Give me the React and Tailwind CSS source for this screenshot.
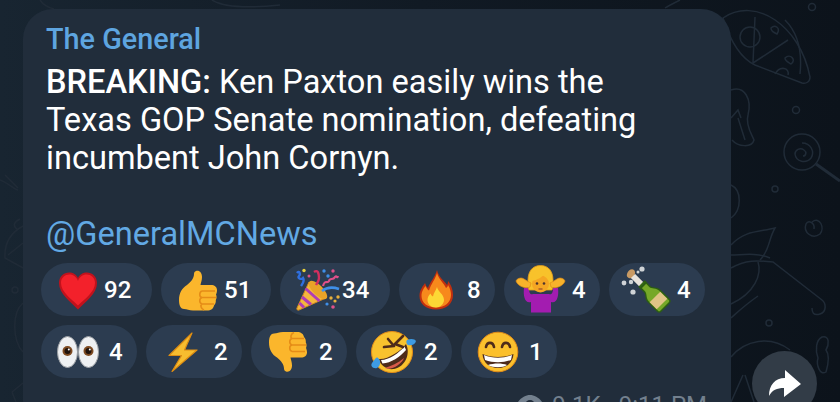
const Heart = () => (
  <svg width="44" height="44" viewBox="0 0 44 44" className="overflow-visible">
    <path d="M22 41.5C15 34 3 26 3 15C3 8.5 8 4.5 13 4.5C17 4.5 20.5 6.5 22 10C23.5 6.5 27 4.5 31 4.5C36 4.5 41 8.5 41 15C41 26 29 34 22 41.5Z" fill="#c1121c" />
    <path d="M22 37.5C15.5 31 5 24 5 15C5 9.5 9 6.5 13.5 6.5C17.5 6.5 20.5 9 22 13C23.5 9 26.5 6.5 30.5 6.5C35 6.5 39 9.5 39 15C39 24 28.5 31 22 37.5Z" fill="#f3212b" />
  </svg>
);
const ThumbShape = () => (
  <g>
    <path d="M20 3C23.5 2 26 5 26 9C26 12 25 14.5 24.5 17L35 17C38.5 17 41 19 41 22C41 24 40.5 25.5 40 26.5C40.8 28 40.8 30.5 39.8 32C40 34 39.5 36 38 37.5C37.5 40.5 35 42.5 31 42.5L17 42.5C13 42.5 11 41 8 41C5 41 3 38 3 32C3 25 6 20 11 17C15 14 18 10 18 6C18 4.5 18.8 3.4 20 3Z" fill="#fbb62c" />
    <path d="M26 23H39M26 29.5H40M26 36H38M26 23C23 24 23 29 26 29.5C23 30.5 23 35 26 36C24 37 25 41 28 42" stroke="#e58c17" strokeWidth="1.6" fill="none" />
  </g>
);
const Thumb = () => (
  <svg width="44" height="44" viewBox="0 0 44 44" className="overflow-visible"><ThumbShape /></svg>
);
const ThumbDown = () => (
  <svg width="44" height="44" viewBox="0 0 44 44" className="overflow-visible"><g transform="translate(0 44.5) scale(1 -1)"><ThumbShape /></g></svg>
);
const Party = () => (
  <svg width="44" height="44" viewBox="0 0 44 44" className="overflow-visible">
    <path d="M14 14L31 30L4 42C2.5 42.6 1.3 41.3 2 40Z" fill="#f4b73d" stroke="#d48a1d" strokeWidth="1" />
    <path d="M10.5 20.5L24.5 33M7 29L16 36.5M4.5 35L9 39.5" stroke="#b03cb5" strokeWidth="3" fill="none" />
    <ellipse cx="23" cy="22" rx="5" ry="12" transform="rotate(-45 23 22)" fill="#e8a328" />
    <path d="M2 5C4 2 6 6 4 8C2 10 6 12 8 10C10 13 8 15 6 18" stroke="#2f6fe0" strokeWidth="2.4" fill="none" />
    <path d="M19 4C23 1 24 6 24 10C24 13 22 15 21 17" stroke="#d32f5f" strokeWidth="2.4" fill="none" />
    <path d="M28 18C30 11 32 16 34 13C35 9 38 13 40 9C42 7 42 11 43 8" stroke="#e0508a" strokeWidth="2.2" fill="none" />
    <path d="M27 23C32 19 38 19 44 21" stroke="#3f8fe8" strokeWidth="2.6" fill="none" />
    <circle cx="9" cy="2.5" r="1.7" fill="#e9d23c" />
    <circle cx="29" cy="3" r="1.7" fill="#3f8fe8" />
    <circle cx="33" cy="8" r="1.7" fill="#3f8fe8" />
    <circle cx="38" cy="3" r="1.7" fill="#e0508a" />
    <circle cx="14" cy="8" r="1.5" fill="#e0508a" />
    <circle cx="36" cy="30" r="1.7" fill="#e8b03c" />
    <circle cx="43" cy="29" r="1.7" fill="#e8b03c" />
    <circle cx="40" cy="33" r="1.6" fill="#e8b03c" />
    <circle cx="32" cy="36" r="1.6" fill="#3f8fe8" />
    <circle cx="38" cy="39" r="1.8" fill="#e0508a" />
  </svg>
);
const Fire = () => (
  <svg width="44" height="44" viewBox="0 0 44 44" className="overflow-visible">
    <path d="M23 2C25 10 30 12 33 17C34 15.5 34 14 34 13C38 18 39 23 39 27C39 36 32 41.5 22 41.5C12 41.5 5.5 36 5.5 28C5.5 22 9 18 11 15C12 17 12.5 19 14 20C16 14 21 9 23 2Z" fill="#c2300f" />
    <path d="M23 5C25 12 30 15 32 20C33.5 19 34 18 34 17C36.5 21 37 24 37 27C37 34 31 39.5 22 39.5C13 39.5 7.5 34.5 7.5 28C7.5 23 10 20 11.5 18C12.5 20 13.5 22 15 22.5C17 16 21.5 11 23 5Z" fill="#f7891c" />
    <path d="M23 19C24 24 30 26 30 32C30 36 26 39.5 22 39.5C17 39.5 13.5 36 13.5 32C13.5 29 15 27 16.5 25.5C17 27 18 28 19 28.5C19.5 25 22 22.5 23 19Z" fill="#fdd835" />
  </svg>
);
const Shrug = () => (
  <svg width="44" height="44" viewBox="0 0 44 44" className="overflow-visible">
    <path d="M5 20L10 20C10 26 12 27 14 26L30 26C32 27 34 26 34 20L39 20C40 28 38 36 32 34L32 44.5L12 44.5L12 34C6 36 4 28 5 20Z" fill="#a31cb0" />
    <path d="M21.5 -2.5C13 -2.5 9 4 9 12C9 16 9 19 10 22L33 22C34 19 34 16 34 12C34 4 30 -2.5 21.5 -2.5Z" fill="#f8c22b" stroke="#e39a1a" strokeWidth="0.8" />
    <circle cx="21.5" cy="16" r="8.5" fill="#f5a623" />
    <path d="M13 13C18 12 24 9 26 5C28 9 30 11 31 13C32 5 27 0 21 1C16 2 12 7 13 13Z" fill="#f8c22b" />
    <circle cx="18" cy="15.5" r="1.3" fill="#4e342e" />
    <circle cx="25" cy="15.5" r="1.3" fill="#4e342e" />
    <path d="M19.5 21H23.5" stroke="#a1502a" strokeWidth="1.3" />
    <path d="M-3 13C-2 10.5 2 9 5 11C8 13 10 14 12 15L11 19C8 21 -1 19 -3 13Z" fill="#f8b22b" stroke="#e08c14" strokeWidth="0.7" />
    <path d="M46 13C45 10.5 41 9 38 11C35 13 33 14 31 15L32 19C35 21 44 19 46 13Z" fill="#f8b22b" stroke="#e08c14" strokeWidth="0.7" />
  </svg>
);
const Bottle = () => (
  <svg width="44" height="44" viewBox="0 0 44 44" className="overflow-visible">
    <path d="M3 6C4 2 8 0 10 2C12 4 11 8 8 10C5 11 2 9 3 6Z" fill="#c99a63" />
    <path d="M9 8L18 17" stroke="#e8e3dc" strokeWidth="6" />
    <circle cx="18" cy="1" r="2.6" fill="#cfd3d6" />
    <circle cx="14" cy="4" r="1.5" fill="#cfd3d6" />
    <circle cx="0" cy="15" r="2.4" fill="#cfd3d6" />
    <circle cx="7" cy="14" r="2.2" fill="#cfd3d6" />
    <circle cx="9" cy="24" r="2.6" fill="#cfd3d6" />
    <g transform="translate(17.5 15.5) rotate(-45)">
      <path d="M-4.5 0H4.5V8C4.5 11 9 13 9 18V31C9 33 7.5 34 6 34H-6C-7.5 34 -9 33 -9 31V18C-9 13 -4.5 11 -4.5 8Z" fill="#2c5e12" />
      <path d="M-3 1H3V8C3 11 7.5 13.5 7.5 18V31C7.5 32 7 32.5 6 32.5H-6C-7 32.5 -7.5 32 -7.5 31V18C-7.5 13.5 -3 11 -3 8Z" fill="#76a828" />
      <rect x="-7.5" y="19" width="15" height="10" fill="#e0c486" />
      <rect x="-4.5" y="1" width="9" height="2.5" fill="#2c5e12" />
    </g>
  </svg>
);
const Eyes = () => (
  <svg width="44" height="44" viewBox="0 0 44 44" className="overflow-visible">
    <ellipse cx="11.5" cy="22" rx="10" ry="15.5" fill="#eef0f2" stroke="#9a9ea3" strokeWidth="1" />
    <ellipse cx="32.5" cy="22" rx="10" ry="15.5" fill="#eef0f2" stroke="#9a9ea3" strokeWidth="1" />
    <circle cx="11.5" cy="21" r="5" fill="#7d4a21" />
    <circle cx="11.5" cy="21" r="3" fill="#20130c" />
    <circle cx="12.8" cy="19.5" r="1" fill="#fff" />
    <circle cx="32.5" cy="21" r="5" fill="#7d4a21" />
    <circle cx="32.5" cy="21" r="3" fill="#20130c" />
    <circle cx="33.8" cy="19.5" r="1" fill="#fff" />
  </svg>
);
const Lightning = () => (
  <svg width="44" height="44" viewBox="0 0 44 44" className="overflow-visible">
    <path d="M31 3L8 25.5L20.5 25.5L11 41.5L36 20L23.5 20Z" fill="#f7bd2f" stroke="#de8d12" strokeWidth="1.2" strokeLinejoin="round" />
  </svg>
);
const Rofl = () => (
  <svg width="44" height="44" viewBox="0 0 44 44" className="overflow-visible">
    <circle cx="21" cy="22" r="20.5" fill="#f9c22e" stroke="#e38c18" strokeWidth="1" />
    <path d="M8 29C16 30 30 21 35 14C40 24 34 37 23 39C15 40 9 35 8 29Z" fill="#4e2b1a" />
    <path d="M10 30C18 30 28 23 33.5 16.5L35 20C29 27 20 33 11.5 33.5Z" fill="#fff" />
    <path d="M14 38C20 36 27 33 33 28C31 34 20 41 14 38Z" fill="#d85a4a" />
    <path d="M17 9L23 16L13 17M32 6L24 14L32 17" stroke="#4e2b1a" strokeWidth="2.6" fill="none" strokeLinejoin="round" strokeLinecap="round" />
    <path d="M36 10C40 8 44 9 45 11C44 15 40 16 37 15C35 14 35 11 36 10Z" fill="#3e9be3" />
    <path d="M4 29C5 28 6 27 7 28C10 30 10 36 6 38C2 39 -1 36 1 33Z" fill="#3e9be3" />
  </svg>
);
const Grin = () => (
  <svg width="44" height="44" viewBox="0 0 44 44" className="overflow-visible">
    <circle cx="22" cy="22" r="19.8" fill="#fbc02d" stroke="#e38c18" strokeWidth="1" />
    <path d="M6.5 24C15 28 29 28 37.5 24C37 33 30 38 22 38C14 38 7 33 6.5 24Z" fill="#4e2b1a" />
    <path d="M8 25C16 28.5 28 28.5 36 25L35 30C27 33 17 33 9 30Z" fill="#fff" />
    <path d="M12 35C18 33 26 33 31 35C27 38 17 38 12 35Z" fill="#fff" />
    <path d="M10 17C11 11.5 17 11.5 18 17M26 17C27 11.5 33 11.5 34 17" stroke="#4e2b1a" strokeWidth="2.6" fill="none" strokeLinecap="round" />
  </svg>
);

const rowOne = [
  { Icon: Heart, count: "92", width: "w-[111px]", gap: "ml-[4px]" },
  { Icon: Thumb, count: "51", width: "w-[110px]", gap: "ml-[4px]" },
  { Icon: Party, count: "34", width: "w-[110px]", gap: "ml-[3px]" },
  { Icon: Fire, count: "8", width: "w-[96px]", gap: "ml-[9px]" },
  { Icon: Shrug, count: "4", width: "w-[96px]", gap: "ml-[9px]" },
  { Icon: Bottle, count: "4", width: "w-[96px]", gap: "ml-[9px]" },
];
const rowTwo = [
  { Icon: Eyes, count: "4", width: "w-[96px]", gap: "ml-[9px]" },
  { Icon: Lightning, count: "2", width: "w-[96px]", gap: "ml-[9px]" },
  { Icon: ThumbDown, count: "2", width: "w-[96px]", gap: "ml-[9px]" },
  { Icon: Rofl, count: "2", width: "w-[96px]", gap: "ml-[9px]" },
  { Icon: Grin, count: "1", width: "w-[96px]", gap: "ml-[9px]" },
];

function Pill({ Icon, count, width, gap }) {
  return (
    <div className={`flex h-[53px] items-center rounded-full bg-[#2c3c50] pl-[15px] ${width}`}>
      <div className="h-[44px] w-[44px] shrink-0"><Icon /></div>
      <span className={`text-[24px] font-medium leading-none text-white ${gap}`}>{count}</span>
    </div>
  );
}

function Doodles() {
  return (
    <svg width="840" height="402" viewBox="0 0 840 402" className="absolute inset-0" fill="none" stroke="#202b37" strokeWidth="1.5">
      <path d="M723 18C755 -4 800 25 810 77C810 82 806 84 802 83L755 65C740 58 730 40 723 18Z" />
      <path d="M755 17L753 63L788 40M785 20C800 35 802 55 800 74" />
      <circle cx="750" cy="37" r="10" />
      <path d="M771 28C775 24 781 28 777 34C773 32 771 31 771 28ZM785 58C790 53 797 60 791 64C788 62 785 61 785 58ZM775 74C780 65 790 68 788 75" />
      <circle cx="812" cy="7" r="3.5" />
      <circle cx="796" cy="110" r="3.5" />
      <circle cx="775" cy="189" r="3" />
      <path d="M731 90C745 85 752 100 748 115C745 125 752 135 754 140C752 148 738 147 732 140" />
      <path d="M731 118L738 110L741 118M738 118L745 140" />
      <circle cx="802" cy="152" r="18" />
      <path d="M802 143C811 143 815 152 811 158C806 164 796 162 795 154C795 150 800 147 804 150C807 152 806 156 803 156" />
      <path d="M816 164L840 181" strokeWidth="3" />
      <path d="M731 185C742 190 742 210 731 218" />
      <path d="M812 222C820 216 825 228 820 234C812 240 803 232 806 224C808 220 815 222 814 229" />
      <path d="M731 245C745 230 760 232 775 228C768 240 770 250 760 260" />
      <path d="M731 255C742 255 755 252 770 258" />
      <path d="M731 268C750 257 765 262 773 262L822 300C826 303 827 312 820 314C813 316 812 312 812 308" />
      <path d="M758 262C762 274 755 293 731 304M758 296C745 305 740 310 731 318" />
      <circle cx="769" cy="323" r="3" />
      <path d="M731 357C745 340 770 335 790 350" />
      <path d="M743 375L731 402M745 375L754 402" />
      <path d="M822 337C830 335 829 345 826 350C830 355 828 365 826 372C820 376 816 365 818 358C815 350 816 340 822 337Z" />
      <path d="M0 180C8 183 15 190 18 190M5 175L18 188" />
      <path d="M23 226C12 232 4 242 5 258C12 262 18 265 23 268M8 255L23 243M18 230C12 226 14 222 20 219" />
      <circle cx="15" cy="290" r="3" />
      <path d="M23 303C12 312 12 340 23 352" />
      <path d="M12 392L23 383M12 392L16 402" />
      <path d="M40 0C44 6 50 8 54 9M212 0C220 5 240 9 280 5" />
      <path d="M680 0C672 4 668 6 665 8" />
    </svg>
  );
}

export default function App() {
  return (
    <div className="relative h-[402px] w-[840px] overflow-hidden bg-gradient-to-r from-[#182531] via-[#111a24] to-[#0c131b] font-['Roboto',sans-serif]">
      <Doodles />
      <div className="relative ml-[23px] mt-[9px] h-[420px] w-[708px] rounded-[30px] bg-[#212d3b] pl-[23px] pt-[15px]">
        <div className="text-[28.8px] font-medium leading-[30px] text-[#5ea5e0]">The General</div>
        <div className="mt-[9px] text-[32.6px] leading-[38px] text-white">
          <div><span className="font-medium">BREAKING:</span> Ken Paxton easily wins the</div>
          <div>Texas GOP Senate nomination, defeating</div>
          <div>incumbent John Cornyn.</div>
          <div className="mt-[38px] text-[#62a9e4]">@GeneralMCNews</div>
        </div>
        <div className="-ml-[5px] mt-[10px] flex flex-col gap-[9px]">
          <div className="flex gap-[9px]">{rowOne.map((p, i) => <Pill key={i} {...p} />)}</div>
          <div className="flex gap-[9px]">{rowTwo.map((p, i) => <Pill key={i} {...p} />)}</div>
        </div>
        <div className="mt-[14px] flex items-center justify-end gap-[7px] pr-[24px] text-[24px] leading-[26px] text-[#73808e]">
          <svg width="30" height="22" viewBox="0 0 30 22"><path d="M1 11C5 4 10 1 15 1C20 1 25 4 29 11C25 18 20 21 15 21C10 21 5 18 1 11Z" fill="#73808e" /><circle cx="15" cy="11" r="5" fill="#212d3b" /></svg>
          <span>9.1K</span>
          <span className="ml-[11px]">9:11 PM</span>
        </div>
      </div>
      <div className="absolute left-[752px] top-[351px] flex h-[65px] w-[65px] items-start justify-center rounded-full bg-[#323c47]">
        <svg width="34" height="28" viewBox="0 0 34 28" className="mt-[19px]"><path d="M17 0L33 14L16 27L16 18C9 18 4 20 1 26C1 15 7 8 17 8Z" fill="#fff" /></svg>
      </div>
    </div>
  );
}
